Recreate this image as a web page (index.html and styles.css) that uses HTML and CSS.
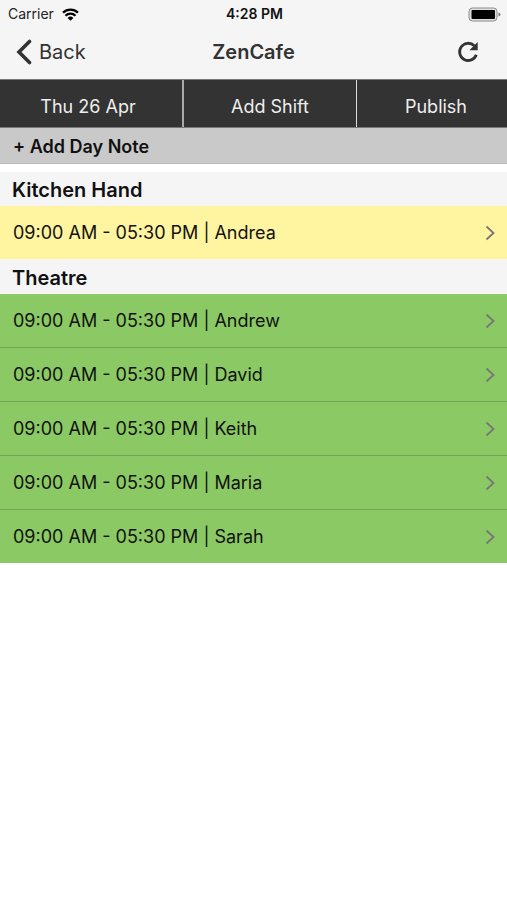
FILE: index.html
```html
<!DOCTYPE html>
<html lang="en">
<head>
<meta charset="utf-8">
<meta name="viewport" content="width=device-width, initial-scale=1">
<title>ZenCafe</title>
<link rel="stylesheet" href="styles.css">
</head>
<body>
<svg class="sprite" aria-hidden="true">
  <symbol id="chevron" viewBox="0 0 10 16"><path d="M1.500 1.500 8.500 8 1.500 14.500" fill="none" stroke="currentColor" stroke-width="1.800"/></symbol>
</svg>
<header class="top">
  <div class="status">
    <div class="carrier">
      <span>Carrier</span>
      <svg class="wifi" viewBox="0 0 17 13" aria-hidden="true">
        <path d="M1 4.600a10.700 10.700 0 0 1 15 0M3.500 7.700a7.100 7.100 0 0 1 10 0" fill="none" stroke="currentColor" stroke-width="2.300"/>
        <path d="M5.600 9.900a4.200 4.200 0 0 1 5.800 0L8.500 12.800z" fill="currentColor"/>
      </svg>
    </div>
    <time class="clock">4:28 PM</time>
    <svg class="battery" viewBox="0 0 33 15" aria-hidden="true">
      <rect x="1" y="1" width="28" height="13" rx="3.500" fill="#e0e0e0" stroke="#8a8a8a" stroke-width="1"/>
      <rect x="3.500" y="3" width="23.500" height="9" rx="1" fill="#000"/>
      <path d="M30.500 5.500q2 .5 2 2t-2 2z" fill="#777"/>
    </svg>
  </div>
  <nav class="navbar">
    <button class="back" type="button">
      <svg class="back-icon" viewBox="0 0 16 26" aria-hidden="true"><path d="M13.500 2.500 3 13l10.500 10.500" fill="none" stroke="currentColor" stroke-width="3.600" stroke-linecap="round"/></svg>
      <span>Back</span>
    </button>
    <h1 class="title">ZenCafe</h1>
    <button class="refresh" type="button" aria-label="Refresh">
      <svg class="refresh-icon" viewBox="0 0 22 22" aria-hidden="true">
        <path d="M17.300 4.800A8.600 8.600 0 1 0 19.300 13.800" fill="none" stroke="currentColor" stroke-width="2.800"/>
        <path d="M20.700 1v8.300h-8.300z" fill="currentColor"/>
      </svg>
    </button>
  </nav>
</header>
<div class="toolbar">
  <button class="tool tool-date" type="button">Thu 26 Apr</button>
  <button class="tool tool-add" type="button">Add Shift</button>
  <button class="tool tool-publish" type="button">Publish</button>
</div>
<button class="day-note" type="button">+ Add Day Note</button>
<main class="roster">
  <section class="group kitchen">
    <h2 class="group-title">Kitchen Hand</h2>
    <ul class="shifts">
      <li><a class="shift" href="#">09:00 AM - 05:30 PM | Andrea<svg class="chevron" aria-hidden="true"><use href="#chevron"/></svg></a></li>
    </ul>
  </section>
  <section class="group theatre">
    <h2 class="group-title">Theatre</h2>
    <ul class="shifts">
      <li><a class="shift" href="#">09:00 AM - 05:30 PM | Andrew<svg class="chevron" aria-hidden="true"><use href="#chevron"/></svg></a></li>
      <li><a class="shift" href="#">09:00 AM - 05:30 PM | David<svg class="chevron" aria-hidden="true"><use href="#chevron"/></svg></a></li>
      <li><a class="shift" href="#">09:00 AM - 05:30 PM | Keith<svg class="chevron" aria-hidden="true"><use href="#chevron"/></svg></a></li>
      <li><a class="shift" href="#">09:00 AM - 05:30 PM | Maria<svg class="chevron" aria-hidden="true"><use href="#chevron"/></svg></a></li>
      <li><a class="shift" href="#">09:00 AM - 05:30 PM | Sarah<svg class="chevron" aria-hidden="true"><use href="#chevron"/></svg></a></li>
    </ul>
  </section>
</main>
</body>
</html>
```
FILE: styles.css
```css
* { box-sizing: border-box; }

body {
  margin: 0;
  background: #fff;
  color: #111;
  font-family: Inter, "Liberation Sans", sans-serif;
  font-size: 18px;
}

button {
  margin: 0;
  padding: 0;
  border: 0;
  background: none;
  color: inherit;
  font: inherit;
  cursor: pointer;
}

svg { display: block; flex: none; }
.sprite { display: none; }

.top { background: #f5f5f5; }

.status,
.navbar {
  display: grid;
  grid-template-columns: 1fr auto 1fr;
  align-items: center;
}

.status {
  padding: 4px 6px 0 8px;
  font-size: 14px;
  line-height: 20px;
}
.carrier { display: flex; align-items: center; gap: 8px; color: #222; }
.wifi { width: 17px; height: 13px; color: #000; }
.clock { font-weight: 600; color: #111; }
.battery { width: 33px; height: 15px; justify-self: end; }

.navbar {
  padding: 0 16px;
  min-height: 55px;
  color: #333;
  font-size: 20px;
  line-height: 24px;
}
.back { display: flex; align-items: center; gap: 7px; justify-self: start; }
.back-icon { width: 16px; height: 26px; }
.title { margin: 0; padding-top: 1px; font-size: 20px; font-weight: 600; }
.refresh { justify-self: end; padding-right: 12px; }
.refresh-icon { width: 22px; height: 22px; }

.toolbar {
  display: grid;
  grid-template-columns: 184fr 173fr 150fr;
  border-top: 1px solid #777;
  border-bottom: 1px solid #777;
  background: #333;
  color: #eee;
}
.tool { padding: 16px 0 9px; line-height: 22px; }
.tool-date { padding-right: 6px; border-right: 2px solid #aaa; }
.tool-add { border-right: 1px solid #ddd; }
.tool-publish { padding-left: 8px; }

.day-note {
  display: block;
  width: 100%;
  padding: 8px 13px 6px;
  border-bottom: 1px solid #bbb;
  background: #c9c9c9;
  color: #111;
  font-weight: 600;
  line-height: 21px;
  text-align: left;
}

.roster { padding-top: 8px; }
.group-title {
  margin: 0;
  padding: 6px 12px 4px;
  background: #f5f5f5;
  font-size: 20px;
  font-weight: 600;
  line-height: 24px;
}
.group + .group { border-top: 1px solid #f7f7f0; }

.shifts { margin: 0; padding: 0; list-style: none; }
.shifts li + li { border-top: 1px solid #74a456; }
.kitchen .shifts { background: #fff49f; }
.theatre .shifts { background: #8bc964; }

.shift {
  display: flex;
  align-items: center;
  justify-content: space-between;
  padding: 16px 12px 15px 13px;
  color: #111;
  line-height: 22px;
  text-decoration: none;
}
.chevron { width: 10px; height: 16px; color: #777; }
```
